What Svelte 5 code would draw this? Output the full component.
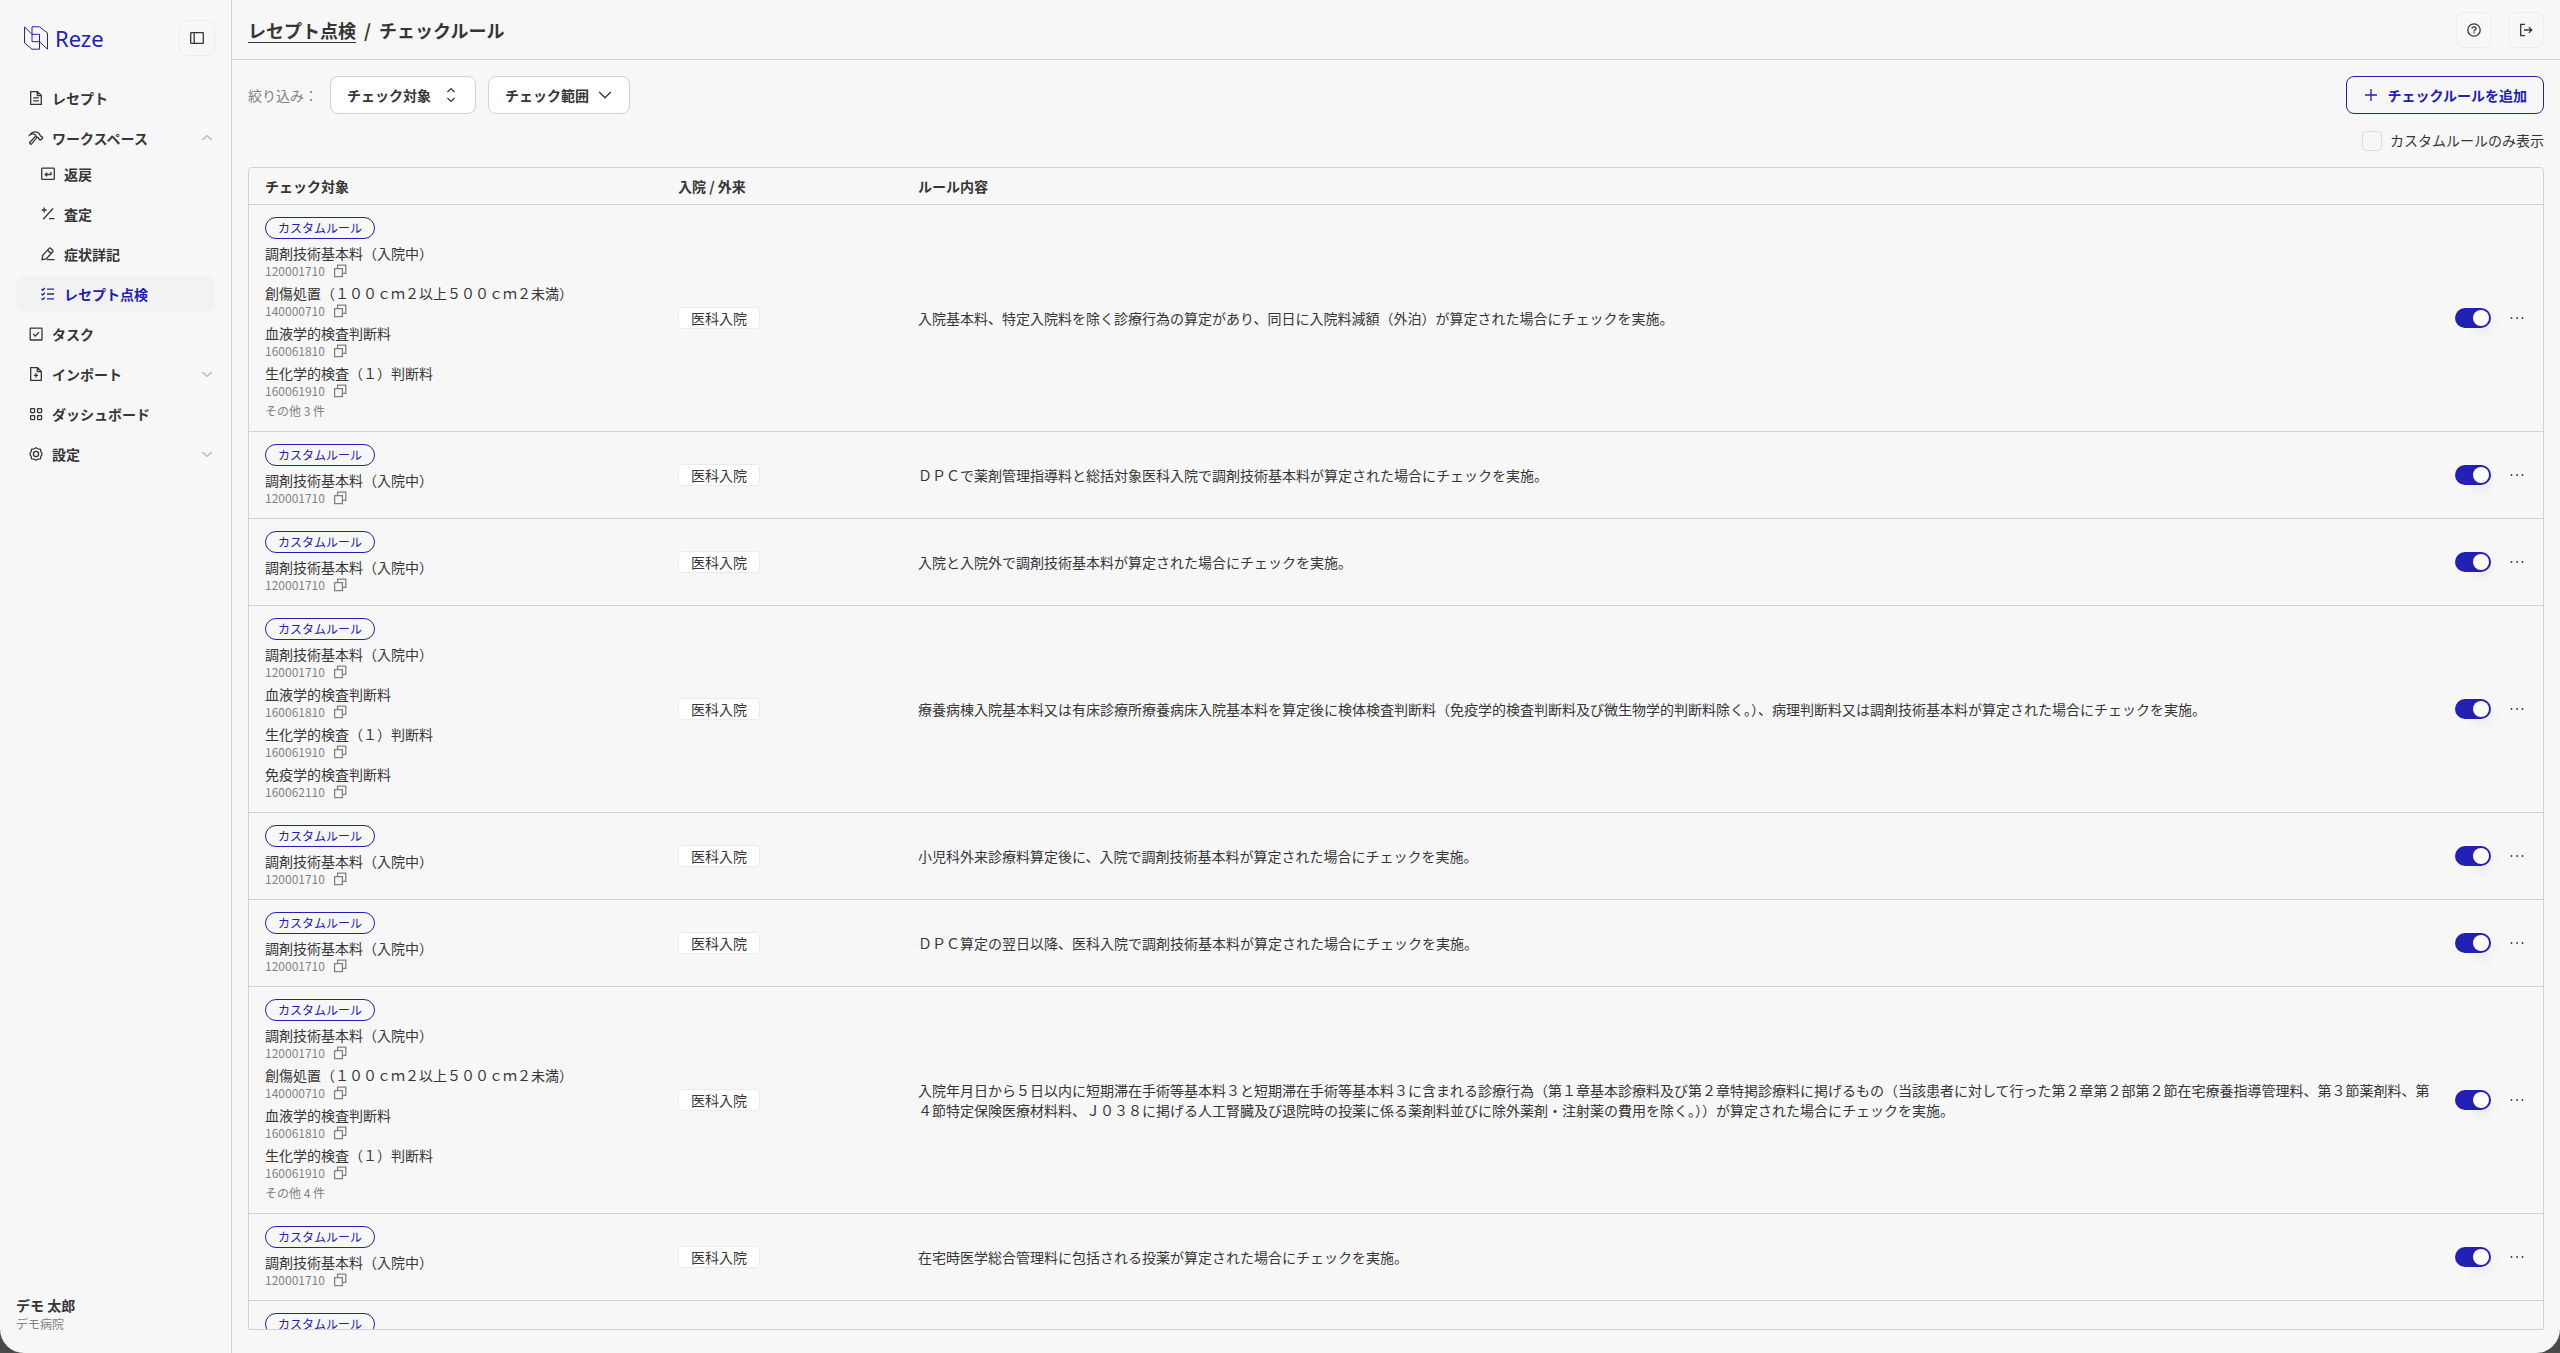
<script lang="ts">
  interface Item {
    name: string;
    code: string;
  }
  interface Rule {
    items: Item[];
    rest?: number;
    kind: string;
    text: string;
    enabled: boolean;
  }

  const base: Item = { name: "調剤技術基本料（入院中）", code: "120001710" };
  const wound: Item = { name: "創傷処置（１００ｃｍ２以上５００ｃｍ２未満）", code: "140000710" };
  const blood: Item = { name: "血液学的検査判断料", code: "160061810" };
  const bio: Item = { name: "生化学的検査（１）判断料", code: "160061910" };
  const immune: Item = { name: "免疫学的検査判断料", code: "160062110" };

  let rules: Rule[] = $state([
    {
      items: [base, wound, blood, bio],
      rest: 3,
      kind: "医科入院",
      text: "入院基本料、特定入院料を除く診療行為の算定があり、同日に入院料減額（外泊）が算定された場合にチェックを実施。",
      enabled: true
    },
    {
      items: [base],
      kind: "医科入院",
      text: "ＤＰＣで薬剤管理指導料と総括対象医科入院で調剤技術基本料が算定された場合にチェックを実施。",
      enabled: true
    },
    {
      items: [base],
      kind: "医科入院",
      text: "入院と入院外で調剤技術基本料が算定された場合にチェックを実施。",
      enabled: true
    },
    {
      items: [base, blood, bio, immune],
      kind: "医科入院",
      text: "療養病棟入院基本料又は有床診療所療養病床入院基本料を算定後に検体検査判断料（免疫学的検査判断料及び微生物学的判断料除く。）、病理判断料又は調剤技術基本料が算定された場合にチェックを実施。",
      enabled: true
    },
    {
      items: [base],
      kind: "医科入院",
      text: "小児科外来診療料算定後に、入院で調剤技術基本料が算定された場合にチェックを実施。",
      enabled: true
    },
    {
      items: [base],
      kind: "医科入院",
      text: "ＤＰＣ算定の翌日以降、医科入院で調剤技術基本料が算定された場合にチェックを実施。",
      enabled: true
    },
    {
      items: [base, wound, blood, bio],
      rest: 4,
      kind: "医科入院",
      text: "入院年月日から５日以内に短期滞在手術等基本料３と短期滞在手術等基本料３に含まれる診療行為（第１章基本診療料及び第２章特掲診療料に掲げるもの（当該患者に対して行った第２章第２部第２節在宅療養指導管理料、第３節薬剤料、第４節特定保険医療材料料、Ｊ０３８に掲げる人工腎臓及び退院時の投薬に係る薬剤料並びに除外薬剤・注射薬の費用を除く。））が算定された場合にチェックを実施。",
      enabled: true
    },
    {
      items: [base],
      kind: "医科入院",
      text: "在宅時医学総合管理料に包括される投薬が算定された場合にチェックを実施。",
      enabled: true
    },
    {
      items: [base],
      kind: "医科入院",
      text: "入院で調剤技術基本料が算定された場合にチェックを実施。",
      enabled: true
    }
  ]);

  let customOnly = $state(false);
  let workspaceOpen = $state(true);

  const workspaceLinks = [
    { label: "返戻", icon: "return" },
    { label: "査定", icon: "assess" },
    { label: "症状詳記", icon: "edit" },
    { label: "レセプト点検", icon: "checks", active: true }
  ];

  function copyCode(code: string) {
    navigator.clipboard?.writeText(code);
  }
</script>

{#snippet icon(name: string)}
  <svg class="icon" width="16" height="16" viewBox="0 0 16 16" fill="none" stroke="currentColor" stroke-width="1.3" aria-hidden="true">
    {#if name === "file"}
      <path d="M2.7 1.7H9.5L13.3 5.5V14.3H2.7ZM9.3 1.9V5.7H13.1M5.2 7.9H10.8M5.2 10.8H10.8" />
    {:else if name === "hammer"}
      <path d="M1.8 4.8C4.2 1.2 8.8 0.9 11.3 3.6L12.6 6.2L14 6.3L14.7 8L12.6 10L11 9.4L10.6 7.8L9.1 7.2L3.6 13.9C2.8 14.8 1 13.3 1.9 12.3L7.8 6L7.2 4.8C5.8 3.6 3.8 3.8 1.8 4.8ZM7.8 6L9.2 7.3" />
    {:else if name === "return"}
      <rect x="1.7" y="2.2" width="12.6" height="11.2" rx="0.6" />
      <path d="M11 6V8.5H5.4M7.2 6.6L5.2 8.5L7.2 10.4" />
    {:else if name === "assess"}
      <path d="M13 2.5L3.2 13.3M4.2 1.5V6.5M1.7 4H6.7M9 12.7H14.4" />
    {:else if name === "edit"}
      <path d="M2.1 13.6L2.7 9.4L9.4 2.1C10 1.5 13.6 4.8 13 5.5L6.3 12.8L2.1 13.6ZM7.6 4.2L11 7.5M7 13.6H14.6" />
    {:else if name === "checks"}
      <path d="M1.5 3L2.7 4.2L4.8 2M1.5 7.8L2.7 9L4.8 6.8M1.5 12.4L2.7 13.6L4.8 11.4M7 3.2H14M7 8H14M7 12.8H14" />
    {:else if name === "task"}
      <rect x="2.2" y="2.2" width="11.8" height="11.8" rx="0.6" />
      <path d="M5.2 8L7.3 10.1L11 6.2" />
    {:else if name === "import"}
      <path d="M2.7 1.7H9.5L13.3 5.5V14.3H2.7ZM9.3 1.9V5.7H13.1M8 7.2V11.4M5.9 9.3H10.1" />
    {:else if name === "grid"}
      <rect x="2.6" y="2.6" width="4" height="4" rx="0.5" />
      <rect x="9.6" y="2.6" width="4" height="4" rx="0.5" />
      <rect x="2.6" y="9.6" width="4" height="4" rx="0.5" />
      <rect x="9.6" y="9.6" width="4" height="4" rx="0.5" />
    {:else if name === "gear"}
      <path d="M8 1.7L9.8 2.8L12.4 3.2L12.9 5.6L14.2 8L12.9 10.4L12.4 12.8L9.8 13.2L8 14.3L6.2 13.2L3.6 12.8L3.1 10.4L1.8 8L3.1 5.6L3.6 3.2L6.2 2.8Z" stroke-linejoin="round" />
      <circle cx="8" cy="8" r="2.6" />
    {:else if name === "panel"}
      <rect x="1.7" y="2.6" width="12.6" height="10.8" rx="0.6" />
      <path d="M5.2 2.6V13.4" />
    {:else if name === "help"}
      <circle cx="8" cy="8" r="6.2" />
      <path d="M6 6.6C6 4.2 10 4.3 10 6.5C10 7.9 8 7.9 8 9.4M8 10.3V11.6" />
    {:else if name === "logout"}
      <path d="M7 2.3H2.7V13.7H7M6 8H13.6M10.9 5.1L13.8 8L10.9 10.9" />
    {:else if name === "sort"}
      <path d="M4.5 5L8 1.6L11.5 5M4.5 11L8 14.4L11.5 11" />
    {:else if name === "down"}
      <path d="M2.2 5L8 10.8L13.8 5" />
    {:else if name === "plus"}
      <path d="M8 2V14M2 8H14" />
    {/if}
  </svg>
{/snippet}

{#snippet chevron(up: boolean)}
  <svg class="chevron" width="12" height="12" viewBox="0 0 12 12" fill="none" stroke="currentColor" aria-hidden="true">
    <path d={up ? "M1.5 8L6 3.5L10.5 8" : "M1.5 4L6 8.5L10.5 4"} />
  </svg>
{/snippet}

<div class="app">
  <aside class="sidebar">
    <div class="brand">
      <a href="#home" class="logo">
        <svg width="24" height="24" viewBox="0 0 24 24" fill="none" stroke="currentColor" aria-hidden="true">
          <path d="M0.5 0.8L8 8.3H15.5V23.2H8L0.5 17Z" />
          <path d="M23.5 23.2L15.5 15.7H8V0.8H15.5L23.5 7Z" />
        </svg>
        <span>Reze</span>
      </a>
      <button type="button" class="icon-button" aria-label="サイドバーを閉じる">{@render icon("panel")}</button>
    </div>

    <nav class="nav">
      <a href="#receipts" class="nav-item">{@render icon("file")}<span>レセプト</span></a>
      <div>
        <button type="button" class="nav-item" aria-expanded={workspaceOpen} onclick={() => (workspaceOpen = !workspaceOpen)}>
          {@render icon("hammer")}<span>ワークスペース</span>{@render chevron(workspaceOpen)}
        </button>
        {#if workspaceOpen}
          <div class="nav-group">
            {#each workspaceLinks as link}
              <a href="#{link.icon}" class="nav-item sub" class:active={link.active}>
                {@render icon(link.icon)}<span>{link.label}</span>
              </a>
            {/each}
          </div>
        {/if}
      </div>
      <a href="#tasks" class="nav-item">{@render icon("task")}<span>タスク</span></a>
      <button type="button" class="nav-item">{@render icon("import")}<span>インポート</span>{@render chevron(false)}</button>
      <a href="#dashboard" class="nav-item">{@render icon("grid")}<span>ダッシュボード</span></a>
      <button type="button" class="nav-item">{@render icon("gear")}<span>設定</span>{@render chevron(false)}</button>
    </nav>

    <div class="user">
      <div class="user-name">デモ 太郎</div>
      <div class="user-org">デモ病院</div>
    </div>
  </aside>

  <main class="main">
    <header class="topbar">
      <h1 class="crumbs">
        <a href="#checks">レセプト点検</a>
        <span>/</span>
        <span>チェックルール</span>
      </h1>
      <div class="topbar-actions">
        <button type="button" class="icon-button" aria-label="ヘルプ">{@render icon("help")}</button>
        <button type="button" class="icon-button" aria-label="ログアウト">{@render icon("logout")}</button>
      </div>
    </header>

    <div class="content">
      <div class="toolbar">
        <div class="filters">
          <label for="target" class="filter-label">絞り込み：</label>
          <div class="select">
            <select id="target">
              <option>チェック対象</option>
            </select>
            {@render icon("sort")}
          </div>
          <button type="button" class="button">チェック範囲{@render icon("down")}</button>
        </div>
        <button type="button" class="button primary">{@render icon("plus")}チェックルールを追加</button>
      </div>

      <label class="custom-only">
        <input type="checkbox" class="checkbox" bind:checked={customOnly} />
        カスタムルールのみ表示
      </label>

      <div class="table-wrap">
        <table>
          <colgroup>
            <col class="col-target" />
            <col class="col-kind" />
            <col />
            <col class="col-actions" />
          </colgroup>
          <thead>
            <tr>
              <th>チェック対象</th>
              <th>入院 / 外来</th>
              <th>ルール内容</th>
              <th></th>
            </tr>
          </thead>
          <tbody>
            {#each rules as rule}
              <tr>
                <td>
                  <div class="targets">
                    <span class="badge">カスタムルール</span>
                    {#each rule.items as item}
                      <div>
                        <div class="item-name">{item.name}</div>
                        <div class="item-code">
                          {item.code}
                          <button type="button" class="copy" aria-label="コードをコピー" onclick={() => copyCode(item.code)}>
                            <svg width="16" height="16" viewBox="0 0 16 16" fill="none" stroke="currentColor" stroke-width="1.3" aria-hidden="true">
                              <path d="M2.6 5.6H10.4V13.6H2.6ZM5.6 5.4V2.2H13.8V10.4H10.6" />
                            </svg>
                          </button>
                        </div>
                      </div>
                    {/each}
                    {#if rule.rest}
                      <div class="rest">その他 {rule.rest} 件</div>
                    {/if}
                  </div>
                </td>
                <td><span class="tag">{rule.kind}</span></td>
                <td class="rule-text">{rule.text}</td>
                <td>
                  <div class="actions">
                    <input type="checkbox" role="switch" class="switch" aria-label="ルールを有効にする" bind:checked={rule.enabled} />
                    <button type="button" class="more" aria-label="メニュー">
                      <svg width="20" height="20" viewBox="0 0 20 20" fill="currentColor" aria-hidden="true">
                        <circle cx="4.5" cy="10" r="0.9" />
                        <circle cx="10" cy="10" r="0.9" />
                        <circle cx="15.5" cy="10" r="0.9" />
                      </svg>
                    </button>
                  </div>
                </td>
              </tr>
            {/each}
          </tbody>
        </table>
      </div>
    </div>
  </main>
</div>

<style>
  :global(body) {
    background: #4a4a4c;
  }
  .app {
    --text: #363638;
    --muted: #828286;
    --line: #d2d2d6;
    --line-soft: #ebebef;
    --primary: #2320b4;
    display: flex;
    height: 100vh;
    overflow: hidden;
    background: #f7f7f7;
    border-radius: 0 0 24px 24px;
    color: var(--text);
    font-family: "Noto Sans CJK JP", "Noto Sans", sans-serif;
    font-size: 14px;
    line-height: 20px;
  }
  .app * {
    box-sizing: border-box;
  }
  button,
  select {
    font: inherit;
    color: inherit;
    cursor: pointer;
  }
  .icon,
  .chevron {
    flex: none;
  }

  .sidebar {
    width: 232px;
    flex: none;
    display: flex;
    flex-direction: column;
    padding: 20px 16px;
    border-right: 1px solid var(--line);
  }
  .brand {
    display: flex;
    align-items: center;
    justify-content: space-between;
    padding-left: 8px;
    margin-bottom: 24px;
  }
  .logo {
    display: flex;
    align-items: center;
    gap: 7px;
    color: var(--primary);
    text-decoration: none;
    font-family: "Noto Sans", sans-serif;
    font-size: 22px;
    line-height: 18px;
  }
  .icon-button {
    width: 36px;
    height: 36px;
    display: flex;
    align-items: center;
    justify-content: center;
    padding: 0;
    background: none;
    border: 1px solid var(--line-soft);
    border-radius: 8px;
  }
  .nav,
  .nav-group {
    display: flex;
    flex-direction: column;
    gap: 4px;
  }
  .nav-item {
    width: 100%;
    height: 36px;
    display: flex;
    align-items: center;
    gap: 8px;
    padding: 0 2px 0 12px;
    background: none;
    border: none;
    border-radius: 8px;
    color: inherit;
    font-weight: 700;
    text-align: left;
    text-decoration: none;
  }
  .nav-item span {
    flex: 1;
  }
  .nav-item.sub {
    padding-left: 24px;
  }
  .nav-item.active {
    background: #f2f2f5;
    color: var(--primary);
  }
  .chevron {
    color: var(--muted);
  }
  .user {
    margin-top: auto;
  }
  .user-name {
    font-weight: 700;
  }
  .user-org {
    color: var(--muted);
    font-size: 12px;
    line-height: 18px;
  }

  .main {
    flex: 1;
    min-width: 0;
    display: flex;
    flex-direction: column;
  }
  .topbar {
    height: 60px;
    flex: none;
    display: flex;
    align-items: center;
    justify-content: space-between;
    padding: 0 16px;
    border-bottom: 1px solid var(--line);
  }
  .crumbs {
    display: flex;
    gap: 8px;
    margin: 0;
    padding-top: 2px;
    font-size: 18px;
    line-height: 24px;
  }
  .crumbs a {
    color: inherit;
    text-decoration: none;
    border-bottom: 1px solid var(--text);
  }
  .topbar-actions {
    display: flex;
    gap: 16px;
  }

  .content {
    flex: 1;
    min-height: 0;
    display: flex;
    flex-direction: column;
    gap: 16px;
    padding: 16px 16px 23px;
  }
  .toolbar,
  .filters {
    display: flex;
    align-items: center;
    gap: 12px;
  }
  .toolbar {
    justify-content: space-between;
  }
  .filter-label {
    color: var(--muted);
  }
  .select {
    display: grid;
    align-items: center;
  }
  .select > :global(*) {
    grid-area: 1 / 1;
  }
  .select .icon {
    justify-self: end;
    margin-right: 17px;
    pointer-events: none;
  }
  .select select {
    appearance: none;
    height: 38px;
    padding: 0 44px 0 16px;
    background: #fff;
    border: 1px solid var(--line);
    border-radius: 8px;
    font-weight: 700;
  }
  .button {
    height: 38px;
    display: flex;
    align-items: center;
    gap: 8px;
    padding: 0 16px;
    background: #fff;
    border: 1px solid var(--line);
    border-radius: 8px;
    font-weight: 700;
  }
  .button.primary {
    background: none;
    border-color: var(--primary);
    color: var(--primary);
  }
  .custom-only {
    align-self: flex-end;
    display: flex;
    align-items: center;
    gap: 8px;
    line-height: 21px;
  }
  .checkbox {
    appearance: none;
    width: 20px;
    height: 20px;
    margin: 0;
    border: 1px solid #dcdce0;
    border-radius: 4px;
  }
  .checkbox:checked {
    background: var(--primary);
  }

  .table-wrap {
    flex: 1;
    min-height: 0;
    overflow: hidden auto;
    scrollbar-width: none;
    border: 1px solid var(--line);
    border-radius: 4px 4px 0 0;
  }
  table {
    width: 100%;
    table-layout: fixed;
    border-collapse: separate;
    border-spacing: 0;
  }
  .col-target {
    width: 413px;
  }
  .col-kind {
    width: 240px;
  }
  .col-actions {
    width: 104px;
  }
  th {
    height: 37px;
    padding: 0 16px;
    border-bottom: 1px solid var(--line);
    text-align: left;
  }
  td {
    padding: 12px 16px;
    border-bottom: 1px solid var(--line);
    vertical-align: middle;
  }
  td.rule-text {
    padding-right: 0;
  }
  .targets {
    display: flex;
    flex-direction: column;
    align-items: flex-start;
    gap: 4px;
  }
  .badge {
    padding: 0 12px;
    border: 1px solid var(--primary);
    border-radius: 11px;
    color: var(--primary);
    font-size: 12px;
    line-height: 20px;
  }
  .item-code {
    display: flex;
    align-items: center;
    gap: 7px;
  }
  .item-code,
  .rest {
    color: var(--muted);
    font-size: 12px;
    line-height: 16px;
  }
  .copy,
  .more {
    display: flex;
    padding: 0;
    background: none;
    border: none;
  }
  .tag {
    display: inline-block;
    vertical-align: top;
    padding: 0 12px;
    background: #fff;
    border: 1px solid var(--line-soft);
    border-radius: 4px;
  }
  .actions {
    display: flex;
    align-items: center;
    gap: 16px;
  }
  .switch {
    appearance: none;
    width: 36px;
    height: 20px;
    margin: 0;
    padding: 2px;
    display: flex;
    background: #c8c8cc;
    border-radius: 10px;
    cursor: pointer;
  }
  .switch::before {
    content: "";
    width: 16px;
    height: 16px;
    border-radius: 50%;
    background: #fff;
    box-shadow: 0 6px 12px rgba(60, 60, 100, 0.1);
  }
  .switch:checked {
    background: var(--primary);
    justify-content: flex-end;
  }
</style>
